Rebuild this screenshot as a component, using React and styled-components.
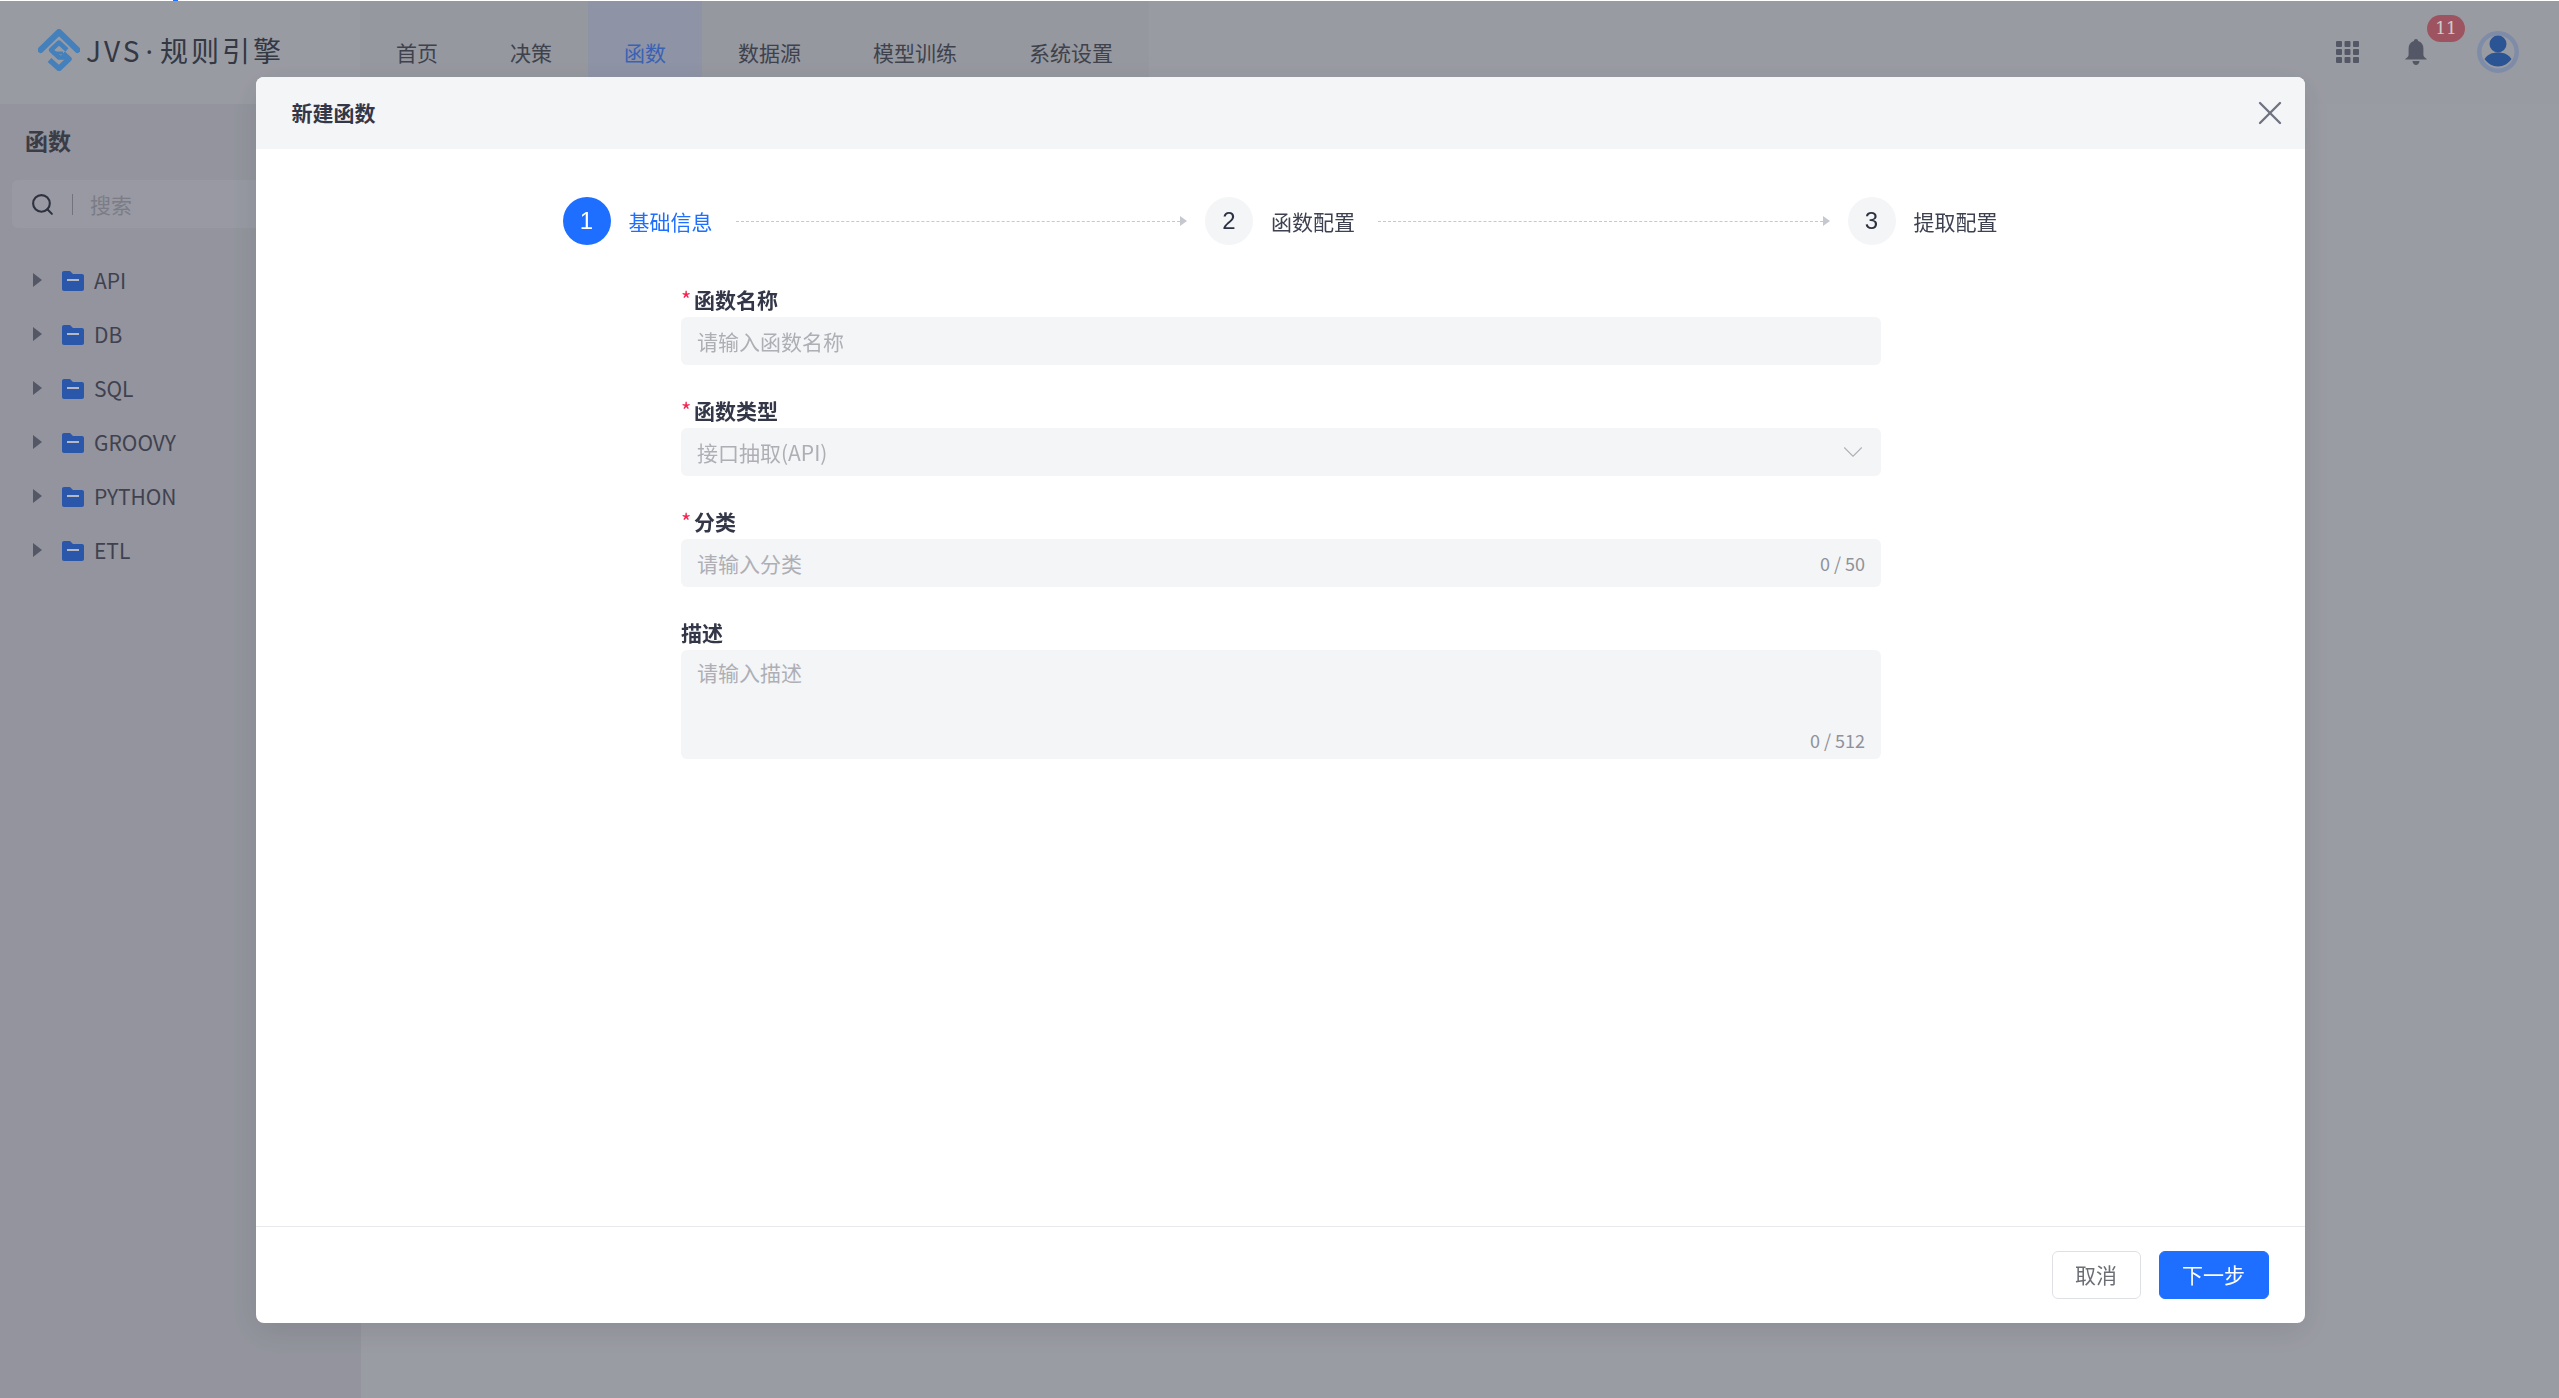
import React from 'react';
import styled, { createGlobalStyle } from 'styled-components';
import { Search, X, ChevronDown } from 'lucide-react';

const GlobalStyle = createGlobalStyle`
  html, body {
    margin: 0;
    padding: 0;
    height: 100%;
    background: #fff;
    overflow: hidden;
  }
  body {
    font-family: "Noto Sans CJK SC", "Noto Sans", sans-serif;
  }
  * {
    box-sizing: border-box;
  }
`;

const Page = styled.div`
  height: 1398px;
  padding-top: 1px;
  display: flex;
  flex-direction: column;
`;

const LoadingTick = styled.div`
  position: fixed;
  top: 0;
  left: 173px;
  width: 5px;
  height: 1px;
  background: #1e6fff;
  z-index: 5;
`;

const Header = styled.header`
  height: 103px;
  flex-shrink: 0;
  display: flex;
  align-items: stretch;
  background: #c0c2cc;
  padding-right: 40px;
`;

const Logo = styled.div`
  width: 360px;
  padding-left: 38px;
  display: flex;
  align-items: center;
  gap: 6px;
  margin-top: -5px;
  font-size: 28px;
  letter-spacing: 3px;
  color: #414653;
  white-space: nowrap;
`;

const LogoDot = styled.span`
  font-family: "Noto Sans", sans-serif;
  margin: 0 4px 0 3px;
`;

const Nav = styled.nav`
  display: flex;
  background: #bcbec8;
`;

const NavItem = styled.div`
  padding: 0 36px;
  font-size: 21px;
  line-height: 102px;
  color: ${props => (props.$active ? '#497be2' : '#4f5360')};
  background: ${props => (props.$active ? '#b2b8d0' : 'transparent')};
  white-space: nowrap;
`;

const HeaderTools = styled.div`
  margin-left: auto;
  display: flex;
  align-items: center;
  gap: 46px;
  margin-top: -2px;
`;

const BellWrap = styled.div`
  position: relative;
  display: flex;
  margin-right: 4px;
`;

const Badge = styled.span`
  position: absolute;
  left: 22px;
  top: -24px;
  width: 38px;
  height: 27px;
  border-radius: 14px;
  background: #c66a78;
  color: #fff;
  font-family: "DejaVu Serif", serif;
  font-size: 17px;
  line-height: 27px;
  text-align: center;
`;

const Body = styled.div`
  flex: 1;
  display: flex;
  min-height: 0;
`;

const Sidebar = styled.aside`
  width: 361px;
  flex-shrink: 0;
  background: #b8bac5;
  padding: 19px 12px 0;
`;

const SidebarTitle = styled.h2`
  margin: 0 0 23px 13px;
  font-size: 23px;
  line-height: 34px;
  font-weight: 700;
  color: #494b58;
`;

const SearchBox = styled.div`
  height: 48px;
  border-radius: 6px;
  background: #bec0cc;
  display: flex;
  align-items: center;
  padding-left: 18px;
  color: #3b3e4e;
  margin-bottom: 25px;
`;

const SearchDivider = styled.span`
  width: 1px;
  height: 21px;
  background: #8e909d;
  margin: 0 17px 0 17px;
`;

const SearchText = styled.span`
  font-size: 21px;
  color: #9a9ca8;
`;

const Tree = styled.div`
  display: flex;
  flex-direction: column;
`;

const TreeRow = styled.div`
  height: 54px;
  display: flex;
  align-items: center;
  padding-left: 21px;
  font-size: 21px;
  color: #515264;
`;

const Caret = styled.span`
  width: 0;
  height: 0;
  border-left: 9px solid #6a6e80;
  border-top: 7px solid transparent;
  border-bottom: 7px solid transparent;
  margin-right: 20px;
`;

const FolderGlyph = styled.svg`
  width: 22px;
  height: 20px;
  margin: 1px 10px 0 0;
  flex-shrink: 0;
`;

const Main = styled.main`
  flex: 1;
  background: #c1c3cd;
`;

const Overlay = styled.div`
  position: fixed;
  inset: 1px 0 0 0;
  background: rgba(0, 0, 0, 0.2);
  padding-top: 76px;
  display: flex;
  justify-content: center;
  align-items: flex-start;
`;

const Modal = styled.div`
  width: 2049px;
  height: 1246px;
  margin-left: 1px;
  background: #fff;
  border-radius: 8px;
  box-shadow: 0 8px 32px rgba(0, 0, 0, 0.1);
  display: flex;
  flex-direction: column;
  overflow: hidden;
`;

const ModalHeader = styled.div`
  height: 72px;
  flex-shrink: 0;
  background: #f4f5f7;
  display: flex;
  align-items: center;
  justify-content: space-between;
  padding: 0 15px 0 36px;
`;

const ModalTitle = styled.h3`
  margin: 0 0 2px;
  font-size: 21px;
  font-weight: 600;
  color: #333747;
`;

const ModalBody = styled.div`
  flex: 1;
  padding-top: 48px;
`;

const Steps = styled.div`
  width: 1435px;
  margin: 0 auto 38px;
  display: flex;
  align-items: center;
`;

const StepCircle = styled.span`
  width: 48px;
  height: 48px;
  border-radius: 50%;
  flex-shrink: 0;
  display: flex;
  align-items: center;
  justify-content: center;
  font-family: "Liberation Sans", Arial, sans-serif;
  font-size: 24px;
  background: ${props => (props.$active ? '#1e6fff' : '#f4f5f7')};
  color: ${props => (props.$active ? '#fff' : '#2d3142')};
`;

const StepLabel = styled.span`
  margin-left: 18px;
  font-size: 21px;
  white-space: nowrap;
  color: ${props => (props.$active ? '#1e6fff' : '#3d4150')};
`;

const StepLine = styled.span`
  flex: 1;
  height: 10px;
  margin: 0 18px 0 23px;
  display: flex;
  align-items: center;
  &::before {
    content: '';
    flex: 1;
    border-top: 1px dashed #c6c8d0;
  }
  &::after {
    content: '';
    border-left: 7px solid #c6c8d0;
    border-top: 5px solid transparent;
    border-bottom: 5px solid transparent;
  }
`;

const Form = styled.form`
  width: 1200px;
  margin: 0 auto;
  transform: translateX(1px);
  display: flex;
  flex-direction: column;
  gap: 29px;
`;

const Field = styled.div`
  display: flex;
  flex-direction: column;
`;

const FieldLabel = styled.label`
  height: 34px;
  line-height: 32px;
  font-size: 21px;
  font-weight: 600;
  color: #333747;
  display: flex;
`;

const Required = styled.span`
  color: #f5224f;
  width: 13px;
  font-size: 22px;
  line-height: 30px;
  font-weight: 400;
`;

const InputShell = styled.div`
  position: relative;
  height: ${props => props.$height || '48px'};
  background: #f4f5f7;
  border-radius: 6px;
  display: flex;
  align-items: ${props => (props.$multi ? 'flex-start' : 'center')};
  padding: ${props => (props.$multi ? '6px 16px' : '0 16px')};
  font-size: 21px;
  line-height: 32px;
`;

const Placeholder = styled.span`
  flex: 1;
  color: #aeafb5;
`;

const Counter = styled.span`
  font-size: 18px;
  line-height: 26px;
  color: #8f9299;
`;

const CornerCounter = styled(Counter)`
  position: absolute;
  right: 16px;
  bottom: 6px;
`;

const SelectArrow = styled(ChevronDown)`
  margin-right: -5px;
  color: #b0b2b9;
`;

const ModalFooter = styled.div`
  height: 97px;
  flex-shrink: 0;
  border-top: 1px solid #e9eaee;
  display: flex;
  justify-content: flex-end;
  align-items: center;
  gap: 18px;
  padding: 0 36px 1px 0;
`;

const Button = styled.button`
  height: 48px;
  padding: 0 22.5px 2px;
  border-radius: 6px;
  border: 1px solid ${props => (props.$primary ? '#1e6fff' : '#dfe0e6')};
  background: ${props => (props.$primary ? '#1e6fff' : '#fff')};
  color: ${props => (props.$primary ? '#fff' : '#6b6e75')};
  font-family: inherit;
  font-size: 21px;
`;

const CloseButton = styled.span`
  display: flex;
  color: #6f7380;
`;

const LogoMark = () => (
  <svg width="42" height="42" viewBox="0 0 42 42" fill="none">
    <path d="M2.5 21 L21 3 L39.5 21" stroke="#55a0eb" strokeWidth="6" strokeLinejoin="round" strokeLinecap="round" />
    <path d="M29 21 L21 13.5 L13 21 L21 28.5 L28 28.5" stroke="#55a0eb" strokeWidth="4.5" strokeLinejoin="round" />
    <path d="M25 24 L14 24" stroke="#55a0eb" strokeWidth="3" />
    <path d="M11.5 31 L21 39.5 L31 30 L25 24.5" stroke="#55a0eb" strokeWidth="5.5" strokeLinejoin="round" />
  </svg>
);

const AppsIcon = () => (
  <svg width="23" height="22" viewBox="0 0 23 22" fill="#6a6e80">
    {[0, 8.5, 17].map(x =>
      [0, 8, 16].map(y => <rect key={`${x}-${y}`} x={x} y={y} width="6" height="6" rx="1" />)
    )}
  </svg>
);

const BellIcon = () => (
  <svg width="22" height="26" viewBox="0 0 22 26" fill="#6a6e80">
    <path d="M11 0c1.2 0 2 .8 2.1 1.9 3.4.9 5.3 3.8 5.3 7.4v6.2c0 1.9 1 3 3.1 4.2.5.3.3.9-.2.9H.7c-.5 0-.7-.6-.2-.9 2.1-1.2 3.1-2.3 3.1-4.2V9.3c0-3.6 1.9-6.5 5.3-7.4C9 .8 9.8 0 11 0z" />
    <path d="M7.5 22h7c0 2.2-1.6 4-3.5 4s-3.5-1.8-3.5-4z" />
  </svg>
);

const AvatarIcon = () => (
  <svg width="42" height="42" viewBox="0 0 42 42">
    <circle cx="21" cy="21" r="18.7" fill="none" stroke="#9eafd2" strokeWidth="4.5" />
    <circle cx="21" cy="13" r="8.5" fill="#3669b9" />
    <path d="M7.5 28c3-4.5 7.5-6.5 13.5-6.5S31.500 23.500 34.500 28c-3 4.500-8 7.500-13.500 7.500S10.500 32.500 7.500 28z" fill="#3669b9" />
  </svg>
);

const FolderIcon = () => (
  <FolderGlyph viewBox="0 0 22 20">
    <path d="M0 2C0 .9.9 0 2 0h6l3 3h9c1.100 0 2 .9 2 2v13c0 1.100-.9 2-2 2H2c-1.100 0-2-.9-2-2z" fill="#366dd6" />
    <rect x="5" y="8" width="12" height="2" fill="#e3e6f0" />
  </FolderGlyph>
);

const NAV_ITEMS = ['首页', '决策', '函数', '数据源', '模型训练', '系统设置'];
const TREE_ITEMS = ['API', 'DB', 'SQL', 'GROOVY', 'PYTHON', 'ETL'];
const STEPS = ['基础信息', '函数配置', '提取配置'];

const App = () => (
  <Page>
    <GlobalStyle />
    <LoadingTick />
    <Header>
      <Logo>
        <LogoMark />
        <span>JVS<LogoDot>·</LogoDot>规则引擎</span>
      </Logo>
      <Nav>
        {NAV_ITEMS.map(item => (
          <NavItem key={item} $active={item === '函数'}>{item}</NavItem>
        ))}
      </Nav>
      <HeaderTools>
        <AppsIcon />
        <BellWrap>
          <BellIcon />
          <Badge>11</Badge>
        </BellWrap>
        <AvatarIcon />
      </HeaderTools>
    </Header>

    <Body>
      <Sidebar>
        <SidebarTitle>函数</SidebarTitle>
        <SearchBox>
          <Search size={25} strokeWidth={2} />
          <SearchDivider />
          <SearchText>搜索</SearchText>
        </SearchBox>
        <Tree>
          {TREE_ITEMS.map(item => (
            <TreeRow key={item}>
              <Caret />
              <FolderIcon />
              {item}
            </TreeRow>
          ))}
        </Tree>
      </Sidebar>
      <Main />
    </Body>

    <Overlay>
      <Modal>
        <ModalHeader>
          <ModalTitle>新建函数</ModalTitle>
          <CloseButton>
            <X size={40} strokeWidth={1.4} />
          </CloseButton>
        </ModalHeader>
        <ModalBody>
          <Steps>
            {STEPS.map((step, index) => (
              <React.Fragment key={step}>
                <StepCircle $active={index === 0}>{index + 1}</StepCircle>
                <StepLabel $active={index === 0}>{step}</StepLabel>
                {index < STEPS.length - 1 && <StepLine />}
              </React.Fragment>
            ))}
          </Steps>
          <Form>
            <Field>
              <FieldLabel><Required>*</Required>函数名称</FieldLabel>
              <InputShell>
                <Placeholder>请输入函数名称</Placeholder>
              </InputShell>
            </Field>
            <Field>
              <FieldLabel><Required>*</Required>函数类型</FieldLabel>
              <InputShell>
                <Placeholder>接口抽取(API)</Placeholder>
                <SelectArrow size={34} strokeWidth={0.8} />
              </InputShell>
            </Field>
            <Field>
              <FieldLabel><Required>*</Required>分类</FieldLabel>
              <InputShell>
                <Placeholder>请输入分类</Placeholder>
                <Counter>0 / 50</Counter>
              </InputShell>
            </Field>
            <Field>
              <FieldLabel>描述</FieldLabel>
              <InputShell $multi $height="109px">
                <Placeholder>请输入描述</Placeholder>
                <CornerCounter>0 / 512</CornerCounter>
              </InputShell>
            </Field>
          </Form>
        </ModalBody>
        <ModalFooter>
          <Button type="button">取消</Button>
          <Button type="button" $primary>下一步</Button>
        </ModalFooter>
      </Modal>
    </Overlay>
  </Page>
);

export default App;
